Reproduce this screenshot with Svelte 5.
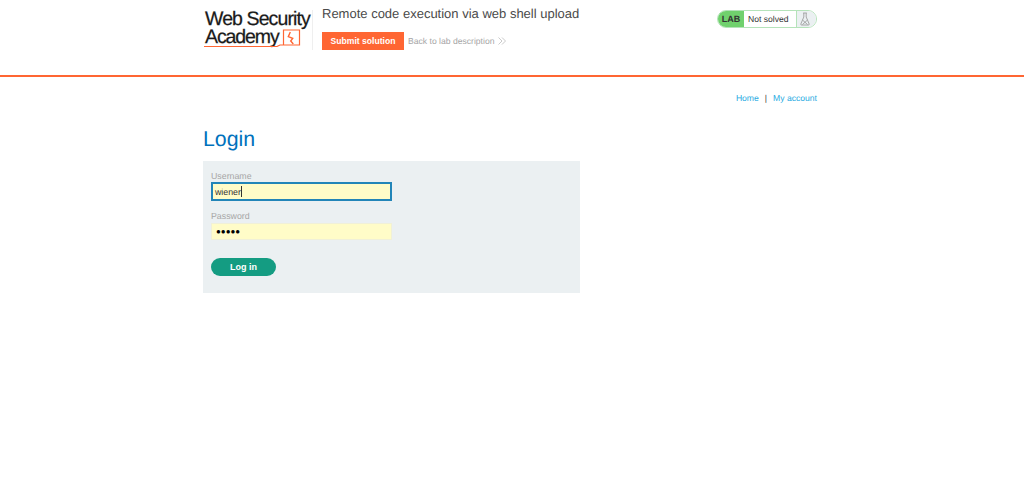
<script>
  let username = 'wiener';
</script>

<div class="banner">
  <div class="inner">
    <div class="logo">
      <div class="logo-text">
        <span class="l1">Web Security</span>
        <span class="l2">Academy</span>
      </div>
      <svg class="logo-art" width="112" height="50" viewBox="0 0 112 50" aria-hidden="true">
        <path d="M0 46.5 H73 L76 45 H79.5 V30 H95.5 V45 H79.5" fill="none" stroke="#ff6633" stroke-width="1.2"/>
        <path d="M86.3 32 L84.3 36.7 L88.7 38.3 L86.7 41 L89.3 44" fill="none" stroke="#ff6633" stroke-width="1.4"/>
      </svg>
    </div>
    <div class="title-block">
      <h2>Remote code execution via web shell upload</h2>
      <div class="actions">
        <button class="submit">Submit solution</button>
        <span class="back">Back to lab description</span>
        <svg class="chev" width="8" height="8" viewBox="0 0 8 8" aria-hidden="true">
          <path d="M0.5 0.5 L4 4 L0.5 7.5 M4 0.5 L7.5 4 L4 7.5" fill="none" stroke="#c4c4c4" stroke-width="0.9"/>
        </svg>
      </div>
    </div>
    <div class="status">
      <span class="lab">LAB</span>
      <span class="state">Not solved</span>
      <span class="flask">
        <svg width="10" height="14" viewBox="0 0 10 14" aria-hidden="true">
          <path d="M3.2 1 H6.8 M3.8 1 V5 L0.8 12 Q0.6 13 1.6 13 H8.4 Q9.4 13 9.2 12 L6.2 5 V1 M2.5 8 L7.5 12.5 M7.5 8 L2.5 12.5" fill="none" stroke="#969696" stroke-width="0.8"/>
        </svg>
      </span>
    </div>
  </div>
</div>

<div class="page">
  <nav class="nav">
    <a href="#home">Home</a><span class="sep">|</span><a href="#account">My account</a>
  </nav>
  <h1>Login</h1>
  <form class="card" onsubmit={(e) => e.preventDefault()}>
    <label for="u">Username</label>
    <div class="field focused" id="u">{username}<i class="caret"></i></div>
    <label for="p">Password</label>
    <div class="field" id="p"><span class="dots">●●●●●</span></div>
    <button class="login" type="submit">Log in</button>
  </form>
</div>

<style>
  :global(body) {
    margin: 0;
    background: #fff;
    font-family: "Liberation Sans", Arial, sans-serif;
    text-rendering: geometricPrecision;
  }
  .banner {
    height: 75px;
    border-bottom: 2px solid #ff6633;
  }
  .inner {
    width: 614px;
    margin-left: 203px;
    display: flex;
    align-items: flex-start;
  }
  .logo {
    position: relative;
    width: 109px;
    height: 40px;
    margin-top: 10px;
    flex: none;
    border-right: 1px solid #efefef;
  }
  .logo-text {
    display: flex;
    flex-direction: column;
    padding: 0 0 0 2px;
    color: #1a1a1a;
    font-size: 19.5px;
    line-height: 18px;
    letter-spacing: -0.9px;
    white-space: nowrap;
    -webkit-text-stroke: 0.25px #1a1a1a;
  }
  .l2 {
    letter-spacing: -1.1px;
  }
  .logo-art {
    position: absolute;
    left: 1px;
    top: -10px;
  }
  .title-block {
    margin-left: 9px;
    flex: none;
    width: 395px;
  }
  h2 {
    margin: 5px 0 0;
    font-size: 13px;
    line-height: 17px;
    font-weight: 400;
    color: #4a4a4a;
    white-space: nowrap;
  }
  .actions {
    display: flex;
    align-items: center;
    margin-top: 10px;
  }
  .submit {
    width: 82px;
    height: 18px;
    padding: 0;
    border: 0;
    background: #ff6633;
    color: #fff;
    font: 700 8.6px/18px "Liberation Sans", Arial, sans-serif;
  }
  .back {
    margin-left: 4px;
    font-size: 8.6px;
    color: #a6a6a6;
  }
  .chev {
    margin-left: 4px;
  }
  .status {
    margin-top: 10px;
    flex: none;
    width: 100px;
    height: 18px;
    box-sizing: border-box;
    display: flex;
    border: 1px solid #b5e3ba;
    border-radius: 9px;
    overflow: hidden;
    font-size: 8.6px;
    line-height: 16px;
    color: #333;
  }
  .lab {
    width: 26px;
    background: #70d16d;
    font-weight: 700;
    font-size: 9px;
    text-align: center;
    flex: none;
  }
  .state {
    width: 53px;
    padding-left: 4px;
    box-sizing: border-box;
    flex: none;
    border-right: 1px solid #b5e3ba;
  }
  .flask {
    flex: 1;
    background: #ebf0f2;
    display: flex;
    padding-left: 3px;
    align-items: center;
  }
  .page {
    width: 614px;
    margin-left: 203px;
  }
  .nav {
    display: flex;
    justify-content: flex-end;
    padding-top: 15px;
    font-size: 8.6px;
    line-height: 12px;
  }
  .nav a {
    color: #29abe2;
    text-decoration: none;
  }
  .sep {
    color: #404040;
    margin: 0 6px;
  }
  h1 {
    margin: 21px 0 0;
    font-size: 21.3px;
    line-height: 28px;
    font-weight: 400;
    color: #0071bc;
  }
  .card {
    width: 377px;
    height: 132px;
    margin-top: 8px;
    box-sizing: border-box;
    padding: 10px 8px 0;
    background: #ebf0f2;
    display: flex;
    flex-direction: column;
    align-items: flex-start;
  }
  label {
    font-size: 8.8px;
    line-height: 11px;
    color: #a6a6a6;
  }
  .field {
    width: 181px;
    height: 17px;
    box-sizing: border-box;
    margin-top: 1px;
    margin-bottom: 9px;
    padding-left: 4px;
    background: #fffcc8;
    border: 1px solid #f0f0d8;
    font-size: 8.8px;
    color: #333;
    display: flex;
    align-items: center;
  }
  .field.focused {
    height: 19px;
    margin-top: 0;
    margin-bottom: 10px;
    border: 2px solid #2285b8;
    padding-left: 2px;
  }
  .caret {
    width: 1px;
    height: 11px;
    background: #333;
  }
  .dots {
    font-size: 8px;
    color: #000;
  }
  .login {
    margin-top: 9px;
    width: 65px;
    height: 18px;
    padding: 0;
    border: 0;
    border-radius: 9px;
    background: #149c82;
    color: #fff;
    font: 700 9px/18px "Liberation Sans", Arial, sans-serif;
  }
</style>
